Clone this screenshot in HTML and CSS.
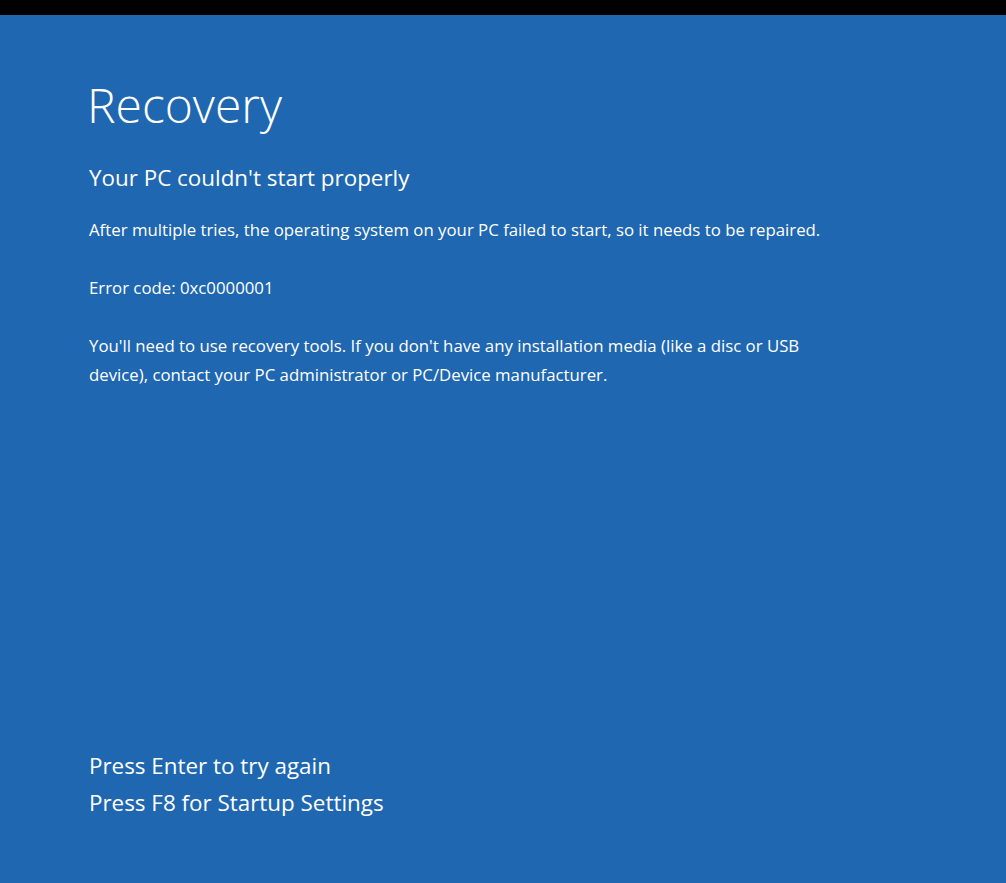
FILE: index.html
```html
<!DOCTYPE html>
<html>
<head>
    <title>Recovery</title>
    <link rel="stylesheet" href="styles.css">
</head>
<body>
    <div class="topbar"></div>
    <div class="screen">
        <h1 class="title">Recovery</h1>
        <h2 class="subtitle">Your PC couldn't start properly</h2>
        <p class="msg">After multiple tries, the operating system on your PC failed to start, so it needs to be repaired.</p>
        <p class="msg">Error code: 0xc0000001</p>
        <p class="msg wrap">You'll need to use recovery tools. If you don't have any installation media (like a disc or USB device), contact your PC administrator or PC/Device manufacturer.</p>
        <div class="prompts">
            <div class="prompt">Press Enter to try again</div>
            <div class="prompt">Press F8 for Startup Settings</div>
        </div>
    </div>
</body>
</html>
```
FILE: styles.css
```css
html, body {
    margin: 0;
    height: 100%;
}

body {
    background-color: #1f67b1;
    color: #ffffff;
    font-family: "Open Sans", "Noto Sans", sans-serif;
    display: flex;
    flex-direction: column;
}

.topbar {
    height: 15px;
    background-color: #000000;
    flex: none;
}

.screen {
    flex: 1;
    display: flex;
    flex-direction: column;
    padding: 0 0 62px 89px;
}

.title {
    font-size: 48px;
    font-weight: 300;
    margin: 60px 0 0 -2px;
    line-height: 60px;
}

.subtitle {
    font-size: 22.4px;
    font-weight: 400;
    margin: 28px 0 0 0;
    line-height: 30px;
}

.msg {
    font-size: 16.8px;
    line-height: 29px;
    margin: 22px 0 0 0;
}

.msg + .msg {
    margin-top: 29px;
}

.wrap {
    max-width: 730px;
}

.prompts {
    margin-top: auto;
}

.prompt {
    font-size: 22.4px;
    line-height: 37px;
}
```
